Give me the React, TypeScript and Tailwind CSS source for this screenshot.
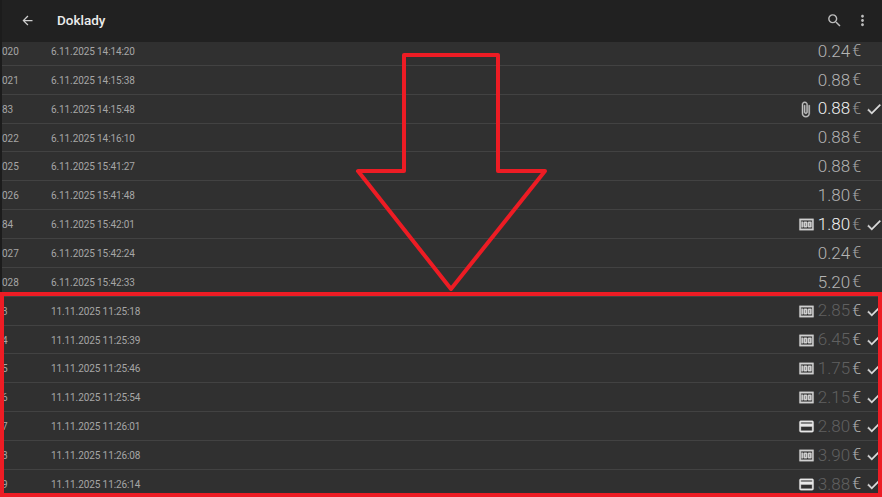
import { MdArrowBack, MdMoreVert, MdSearch } from "react-icons/md"

type Doc = {
  id: string
  date: string
  amount: string
  icon?: "clip" | "cash" | "card"
  done?: boolean
  state: "plain" | "paid" | "dim"
}

const docs: Doc[] = [
  { id: "020", date: "6.11.2025 14:14:20", amount: "0.24", state: "plain" },
  { id: "021", date: "6.11.2025 14:15:38", amount: "0.88", state: "plain" },
  { id: "83", date: "6.11.2025 14:15:48", amount: "0.88", icon: "clip", done: true, state: "paid" },
  { id: "022", date: "6.11.2025 14:16:10", amount: "0.88", state: "plain" },
  { id: "025", date: "6.11.2025 15:41:27", amount: "0.88", state: "plain" },
  { id: "026", date: "6.11.2025 15:41:48", amount: "1.80", state: "plain" },
  { id: "84", date: "6.11.2025 15:42:01", amount: "1.80", icon: "cash", done: true, state: "paid" },
  { id: "027", date: "6.11.2025 15:42:24", amount: "0.24", state: "plain" },
  { id: "028", date: "6.11.2025 15:42:33", amount: "5.20", state: "plain" },
  { id: "3", date: "11.11.2025 11:25:18", amount: "2.85", icon: "cash", done: true, state: "dim" },
  { id: "4", date: "11.11.2025 11:25:39", amount: "6.45", icon: "cash", done: true, state: "dim" },
  { id: "5", date: "11.11.2025 11:25:46", amount: "1.75", icon: "cash", done: true, state: "dim" },
  { id: "6", date: "11.11.2025 11:25:54", amount: "2.15", icon: "cash", done: true, state: "dim" },
  { id: "7", date: "11.11.2025 11:26:01", amount: "2.80", icon: "card", done: true, state: "dim" },
  { id: "8", date: "11.11.2025 11:26:08", amount: "3.90", icon: "cash", done: true, state: "dim" },
  { id: "9", date: "11.11.2025 11:26:14", amount: "3.88", icon: "card", done: true, state: "dim" },
]

const paths = {
  clip: "M16.5 6v11.5c0 2.21-1.79 4-4 4s-4-1.79-4-4V5c0-1.38 1.12-2.5 2.5-2.5s2.5 1.12 2.5 2.5v10.5c0 .55-.45 1-1 1s-1-.45-1-1V6H10v9.5c0 1.38 1.12 2.5 2.5 2.5s2.5-1.12 2.5-2.5V5c0-2.21-1.79-4-4-4S7 2.79 7 5v12.5c0 3.04 2.46 5.5 5.5 5.5s5.5-2.46 5.5-5.5V6h-1.5z",
  cash: "M5 8h2v8H5zm7 0H9c-.55 0-1 .45-1 1v6c0 .55.45 1 1 1h3c.55 0 1-.45 1-1V9c0-.55-.45-1-1-1zm-1 6h-1v-4h1v4zm7-6h-3c-.55 0-1 .45-1 1v6c0 .55.45 1 1 1h3c.55 0 1-.45 1-1V9c0-.55-.45-1-1-1zm-1 6h-1v-4h1v4zM2 4v16h20V4H2zm2 14V6h16v12H4z",
  card: "M20 4H4c-1.11 0-1.99.89-1.99 2L2 18c0 1.11.89 2 2 2h16c1.11 0 2-.89 2-2V6c0-1.11-.89-2-2-2zm0 14H4v-6h16v6zm0-10H4V6h16v2z",
  check: "M9 16.17L4.83 12l-1.42 1.41L9 19 21 7l-1.41-1.41z",
}

const Glyph = ({ d, className }: { d: string; className: string }) => (
  <svg viewBox="0 0 24 24" fill="currentColor" stroke="currentColor" className={className}>
    <path d={d} />
  </svg>
)

const amountColor = {
  plain: "text-[#b4b4b4]",
  paid: "text-[#f0f0f0]",
  dim: "text-[#606060]",
}

const euroColor = {
  plain: "text-[#a8a8a8]",
  paid: "text-[#969696]",
  dim: "text-[#b0b0b0]",
}

const Row = ({ doc }: { doc: Doc }) => (
  <div className="flex items-center h-[28.87px] shrink-0 pt-[1px] border-b border-[#424242]">
    <span className="w-[49px] text-[10px] text-[#a6a6a6]">{doc.id}</span>
    <span className="flex-1 text-[10px] tracking-[-0.1px] text-[#a6a6a6]">{doc.date}</span>
    {doc.icon === "clip" && <Glyph d={paths.clip} className="w-[17px] h-[17px] mr-[4px] text-[#c4c4c4] stroke-[0.6px]" />}
    {doc.icon === "cash" && <Glyph d={paths.cash} className="w-[17px] h-[17px] mr-[3px] text-[#d0d0d0] stroke-[0.5px]" />}
    {doc.icon === "card" && <Glyph d={paths.card} className="w-[17px] h-[17px] mr-[3px] text-[#e8e8e8] stroke-[0.5px]" />}
    <span className={`text-[17px] font-light ${amountColor[doc.state]}`}>{doc.amount}</span>
    <span className={`ml-[2px] text-[16px] font-light ${euroColor[doc.state]}`}>€</span>
    <span className="flex justify-end w-[21px]">
      {doc.done && <Glyph d={paths.check} className="w-[18px] h-[18px] -mr-[1px] text-[#dcdcdc] stroke-[0.5px]" />}
    </span>
  </div>
)

export default function App() {
  return (
    <div className="relative flex w-[882px] h-[497px] overflow-hidden bg-[#303030] font-['Roboto',sans-serif]">
      <div className="w-[2px] shrink-0 bg-[#1c1c1c]" />
      <div className="flex flex-col flex-1 min-w-0">
        <header className="relative z-10 flex items-center h-[42px] shrink-0 pb-[2px] pl-[18px] pr-[11px] bg-[#212121]">
          <MdArrowBack className="w-[15px] h-[15px] text-[#cfcfcf]" />
          <h1 className="ml-[22px] flex-1 text-[13.5px] font-medium text-[#ececec]">Doklady</h1>
          <MdSearch className="w-[17px] h-[17px] text-[#bdbdbd]" />
          <MdMoreVert className="ml-[11px] w-[17px] h-[17px] text-[#bdbdbd]" />
        </header>
        <div className="flex flex-col -mt-[5px]">
          {docs.map((doc) => (
            <Row key={doc.id} doc={doc} />
          ))}
        </div>
      </div>
      {/* red annotation drawn on top of the screenshot */}
      <svg className="absolute inset-0 z-20" width="882" height="497" viewBox="0 0 882 497" fill="none">
        <polygon
          points="404,55 498,55 498,171 545,171 451,289 358,171 404,171"
          stroke="#ed1c24"
          strokeWidth="4"
          strokeLinejoin="round"
        />
        <rect x="2" y="294" width="878" height="201" stroke="#ed1c24" strokeWidth="4" />
      </svg>
    </div>
  )
}
